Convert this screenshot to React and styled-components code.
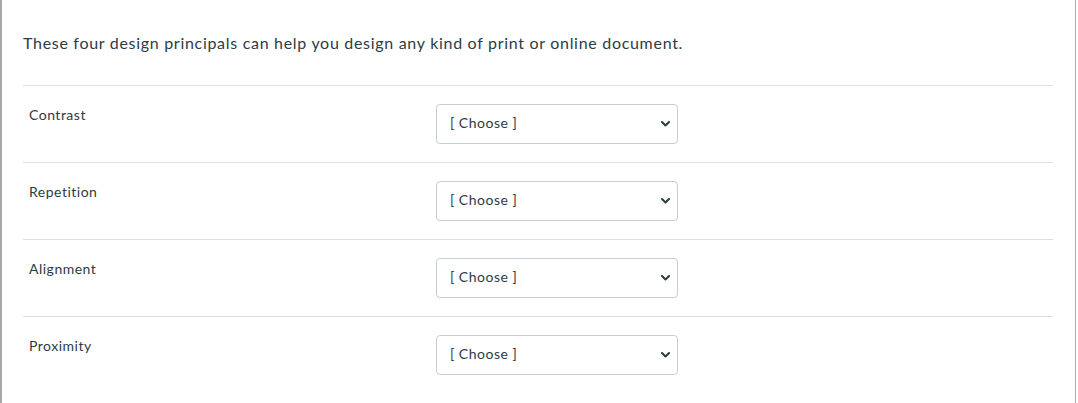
import styled, { createGlobalStyle } from "styled-components";

const GlobalStyle = createGlobalStyle`
  body {
    margin: 0;
    background: #fff;
    font-family: Lato, "Liberation Sans", sans-serif;
    color: #2d3b45;
  }
`;

const Frame = styled.div`
  box-sizing: border-box;
  width: 1076px;
  height: 403px;
  border-left: 2px solid #a8a8a8;
  border-right: 1px solid #a8a8a8;
  padding: 31px 22px 0 21px;
`;

const Intro = styled.p`
  margin: 0 0 30px;
  font-size: 16px;
  line-height: 24px;
  letter-spacing: 0.7px;
`;

const Row = styled.div`
  display: grid;
  grid-template-columns: 413px 242px;
  border-top: 1px solid #dddddd;
  padding: 18px 0;
`;

const Label = styled.div`
  padding: 1px 0 0 6px;
  font-size: 14px;
  line-height: 20px;
  letter-spacing: 0.5px;
`;

const Select = styled.div`
  box-sizing: border-box;
  height: 40px;
  display: flex;
  align-items: center;
  justify-content: space-between;
  padding: 0 7px 3px 13px;
  border: 1px solid #c7cdd1;
  border-radius: 4px;
  font-size: 14px;
  letter-spacing: 0.5px;
  color: #2d3b45;

  svg {
    margin-top: 3px;
  }
`;

const Chevron = () => (
  <svg width="9" height="6" viewBox="0 0 9 6">
    <path
      d="M1 1 L4.5 4.5 L8 1"
      fill="none"
      stroke="#2d3b45"
      strokeWidth="2"
      strokeLinecap="round"
      strokeLinejoin="round"
    />
  </svg>
);

const items = ["Contrast", "Repetition", "Alignment", "Proximity"];

const App = () => {
  return (
    <>
      <GlobalStyle />
      <Frame>
        <Intro>
          These four design principals can help you design any kind of print or
          online document.
        </Intro>
        {items.map((name) => (
          <Row key={name}>
            <Label>{name}</Label>
            <Select>
              <span>[ Choose ]</span>
              <Chevron />
            </Select>
          </Row>
        ))}
      </Frame>
    </>
  );
};

export default App;
